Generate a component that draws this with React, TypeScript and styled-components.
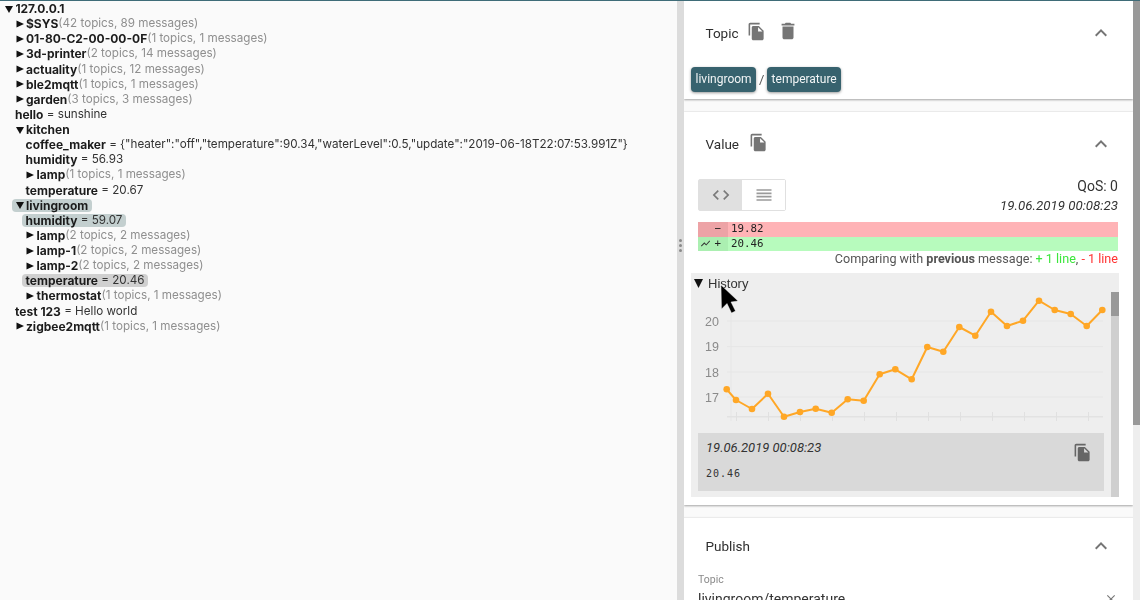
import React from 'react';
import styled, {createGlobalStyle} from 'styled-components';

const colors = {
    teal: '#37626e',
    text: '#222',
    muted: '#8f8f8f',
    icon: '#757575',
    orange: '#ffa726',
};

const GlobalStyle = createGlobalStyle`
  html, body {
    margin: 0;
    padding: 0;
    height: 100%;
    overflow: hidden;
    background: #fafafa;
    font-family: "Liberation Sans", Arial, sans-serif;
    color: ${colors.text};
  }
`;

const Page = styled.div`
  position: relative;
  width: 1140px;
  height: 600px;
  overflow: hidden;
  display: flex;
  flex-direction: column;
  filter: blur(.35px);
`;

const TopLine = styled.div`
  height: 1px;
  flex: none;
  background: #3f6c78;
`;

const Main = styled.div`
  flex: 1;
  min-height: 0;
  display: flex;
`;

const TreePane = styled.div`
  width: 677px;
  flex: none;
  font-family: Inter, sans-serif;
  font-size: 12px;
  color: #222;
`;

const Row = styled.div<{$depth: number}>`
  height: 15.14px;
  line-height: 15.14px;
  display: flex;
  align-items: center;
  white-space: nowrap;
  padding-left: ${p => 4.4 + p.$depth * 10.6}px;
`;

const Pill = styled.span<{$tone?: 'teal' | 'gray'}>`
  display: inline-flex;
  align-items: center;
  height: 13px;
  ${p => p.$tone && `
    margin-left: -3.5px;
    padding: 0 3.5px;
    border-radius: 4px;
    background: ${p.$tone === 'teal' ? '#c3cfcf' : '#d0d0d0'};
  `}
`;

const Arrow = styled.svg`
  width: 8px;
  height: 8px;
  flex: none;
  margin: 0 2.5px 0 .5px;
  fill: #111;
`;

const Name = styled.b`
  font-weight: 700;
  color: #1c1c1c;
`;

const Summary = styled.span`
  font-size: 11.65px;
  color: ${colors.muted};
`;

const Value = styled.span`
  font-size: 11.65px;
  white-space: pre;
  color: #333;
`;

const Divider = styled.div`
  width: 7px;
  flex: none;
  background: #dcdcdc;
  display: flex;
  flex-direction: column;
  align-items: center;
  justify-content: center;
  gap: 2px;
  padding-bottom: 110px;
  box-sizing: border-box;
`;

const Dot = styled.span`
  width: 3px;
  height: 3px;
  border-radius: 50%;
  background: #8a8a8a;
`;

const Sidebar = styled.div`
  width: 449px;
  flex: none;
  overflow: hidden;
  background: #fafafa;
`;

const PageScrollbar = styled.div`
  width: 7px;
  flex: none;
  background: #eeeeee;
`;

const PageThumb = styled.div`
  height: 424px;
  background: #999;
`;

const Card = styled.section<{$last?: boolean}>`
  background: #fff;
  box-shadow: ${p => (p.$last ? '0 -1px 1px rgba(0,0,0,.06)' : '0 1px 2px rgba(0,0,0,.35), 0 -1px 1px rgba(0,0,0,.04)')};
  margin-bottom: 13px;
`;

const CardHeader = styled.div<{$height: number}>`
  height: ${p => p.$height}px;
  display: flex;
  align-items: center;
  padding: 0 20px 0 21.5px;
`;

const CardTitle = styled.span`
  font-family: Roboto, sans-serif;
  font-size: 13.5px;
  color: #2e2e2e;
`;

const HeaderSpacer = styled.div`
  flex: 1;
`;

const Icon = styled.svg<{$size: number; $color?: string}>`
  width: ${p => p.$size}px;
  height: ${p => p.$size}px;
  flex: none;
  fill: ${p => p.$color || colors.icon};
`;

const HeaderAction = styled.span<{$gap: number}>`
  display: inline-flex;
  margin-left: ${p => p.$gap}px;
  margin-top: -3px;
`;

const Chips = styled.div`
  display: flex;
  align-items: center;
  padding: 3px 0 7px 7px;
`;

const Chip = styled.span`
  height: 25px;
  line-height: 25px;
  padding: 0 4.5px;
  border-radius: 4px;
  background: ${colors.teal};
  color: #f2f5f6;
  font-family: Roboto, sans-serif;
  font-size: 12px;
  box-shadow: 0 1px 3px rgba(0, 0, 0, .4);
`;

const Slash = styled.span`
  width: 11px;
  text-align: center;
  font-family: Roboto, sans-serif;
  font-size: 13px;
  color: #555;
`;

const ValueBody = styled.div`
  padding: 3px 15px 8px 14px;
`;

const Toolbar = styled.div`
  display: flex;
  justify-content: space-between;
  height: 32px;
`;

const Toggle = styled.div`
  display: flex;
  border: 1px solid #e0e0e0;
  border-radius: 2px;
  box-sizing: border-box;
  height: 32px;
`;

const ToggleButton = styled.div<{$active?: boolean}>`
  width: 43px;
  display: flex;
  align-items: center;
  justify-content: center;
  background: ${p => (p.$active ? '#e0e0e0' : '#fff')};
`;

const Meta = styled.div`
  text-align: right;
  color: #333;
`;

const Qos = styled.div`
  font-family: Roboto, sans-serif;
  font-size: 14px;
  height: 19px;
  line-height: 15px;
`;

const DateLabel = styled.div<{$large?: boolean}>`
  font-family: Roboto, sans-serif;
  font-style: italic;
  font-size: ${p => (p.$large ? 13.3 : 13)}px;
  color: #333;
`;

const Diff = styled.div`
  margin-top: 11px;
  font-family: "DejaVu Sans Mono", monospace;
  font-size: 10.8px;
  color: #222;
`;

const DiffRow = styled.div<{$kind: 'del' | 'add'}>`
  height: 14.5px;
  line-height: 14.5px;
  display: flex;
  background: ${p => (p.$kind === 'del' ? '#ffb3b6' : '#b7fbbd')};
`;

const DiffGutter = styled.div<{$kind: 'del' | 'add'}>`
  width: 30px;
  flex: none;
  display: flex;
  align-items: center;
  justify-content: flex-end;
  gap: 3px;
  padding-right: 7px;
  box-sizing: border-box;
  background: ${p => (p.$kind === 'del' ? '#eda3a6' : '#abefb1')};
`;

const DiffText = styled.span`
  padding-left: 3px;
`;

const CompareNote = styled.div`
  height: 22px;
  line-height: 16px;
  text-align: right;
  font-family: Roboto, sans-serif;
  font-size: 12.6px;
  color: #555;
`;

const Added = styled.span`
  color: #3ce63c;
`;

const Removed = styled.span`
  color: #f33;
`;

const History = styled.div`
  position: relative;
  height: 224px;
  margin: 0 -1px 0 -7px;
  background: #eee;
  overflow: hidden;
`;

const HistoryHead = styled.div`
  height: 20px;
  display: flex;
  align-items: center;
  padding-left: 3px;
  font-size: 13px;
  color: #333;
`;

const HistoryArrow = styled.svg`
  width: 9px;
  height: 9px;
  margin-right: 5px;
  fill: #111;
`;

const Chart = styled.svg`
  display: block;
  width: 420px;
  height: 140px;
`;

const AxisLabel = styled.text`
  font-family: "Liberation Sans", sans-serif;
  font-size: 12.5px;
  fill: #8a8a8a;
`;

const Details = styled.div`
  position: relative;
  height: 58px;
  margin-left: 7px;
  width: 406px;
  background: #d9d9d9;
  padding: 7px 8px;
  box-sizing: border-box;
`;

const DetailValue = styled.div`
  margin-top: 13px;
  font-family: "DejaVu Sans Mono", monospace;
  font-size: 10px;
  letter-spacing: 1px;
  color: #333;
`;

const DetailCopy = styled.span`
  position: absolute;
  right: 12px;
  top: 10px;
  display: inline-flex;
`;

const HistoryScroll = styled.div`
  position: absolute;
  top: 19px;
  right: 0;
  bottom: 0;
  width: 8px;
  background: #cfcfcf;
`;

const HistoryThumb = styled.div`
  height: 24px;
  background: #999;
`;

const PublishBody = styled.div`
  padding: 0 15px 0 14px;
`;

const FieldLabel = styled.div`
  font-family: Roboto, sans-serif;
  font-size: 10.5px;
  color: #8a8a8a;
  height: 17px;
  line-height: 12px;
`;

const FieldRow = styled.div`
  display: flex;
  justify-content: space-between;
  align-items: center;
  font-family: Roboto, sans-serif;
  font-size: 14px;
  color: #333;
`;

const Cursor = styled.svg`
  position: absolute;
  left: 715px;
  top: 280px;
  width: 30px;
  height: 40px;
`;

const paths = {
    copy: 'M16 1H4c-1.1 0-2 .9-2 2v14h2V3h12V1zm-1 4l6 6v10c0 1.1-.9 2-2 2H7.99C6.89 23 6 22.1 6 21l.01-14c0-1.1.89-2 1.99-2h7zm-1 7h5.5L14 6.5V12z',
    trash: 'M6 19c0 1.1.9 2 2 2h8c1.1 0 2-.9 2-2V7H6v12zM19 4h-3.5l-1-1h-5l-1 1H5v2h14V4z',
    less: 'M12 8l-6 6 1.41 1.41L12 10.83l4.59 4.58L18 14z',
    code: 'M9.4 16.6L4.8 12l4.6-4.6L8 6l-6 6 6 6 1.4-1.4zm5.2 0l4.6-4.6-4.6-4.6L16 6l6 6-6 6-1.4-1.4z',
    lines: 'M3 15h18v-2H3v2zm0 4h18v-2H3v2zm0-8h18V9H3v2zm0-6v2h18V5H3z',
    chart: 'M3.5 18.49l6-6.01 4 4L22 6.92l-1.41-1.41-7.09 7.97-4-4L2 16.99z',
    clear: 'M19 6.41L17.59 5 12 10.59 6.41 5 5 6.41 10.59 12 5 17.59 6.41 19 12 13.41 17.59 19 19 17.59 13.41 12z',
};

const MuiIcon = ({d, size, color}: {d: string; size: number; color?: string}) => (
    <Icon viewBox="0 0 24 24" $size={size} $color={color}><path d={d}/></Icon>
);

type TreeNode = {
    depth: number;
    name: string;
    arrow?: 'open' | 'closed';
    summary?: string;
    value?: string;
    tone?: 'teal' | 'gray';
};

const tree: TreeNode[] = [
    {depth: 0, name: '127.0.0.1', arrow: 'open'},
    {depth: 1, name: '$SYS', arrow: 'closed', summary: '(42 topics, 89 messages)'},
    {depth: 1, name: '01-80-C2-00-00-0F', arrow: 'closed', summary: '(1 topics, 1 messages)'},
    {depth: 1, name: '3d-printer', arrow: 'closed', summary: '(2 topics, 14 messages)'},
    {depth: 1, name: 'actuality', arrow: 'closed', summary: '(1 topics, 12 messages)'},
    {depth: 1, name: 'ble2mqtt', arrow: 'closed', summary: '(1 topics, 1 messages)'},
    {depth: 1, name: 'garden', arrow: 'closed', summary: '(3 topics, 3 messages)'},
    {depth: 1, name: 'hello', value: ' = sunshine'},
    {depth: 1, name: 'kitchen', arrow: 'open'},
    {depth: 2, name: 'coffee_maker', value: ' = {"heater":"off","temperature":90.34,"waterLevel":0.5,"update":"2019-06-18T22:07:53.991Z"}'},
    {depth: 2, name: 'humidity', value: ' = 56.93'},
    {depth: 2, name: 'lamp', arrow: 'closed', summary: '(1 topics, 1 messages)'},
    {depth: 2, name: 'temperature', value: ' = 20.67'},
    {depth: 1, name: 'livingroom', arrow: 'open', tone: 'teal'},
    {depth: 2, name: 'humidity', value: ' = 59.07', tone: 'teal'},
    {depth: 2, name: 'lamp', arrow: 'closed', summary: '(2 topics, 2 messages)'},
    {depth: 2, name: 'lamp-1', arrow: 'closed', summary: '(2 topics, 2 messages)'},
    {depth: 2, name: 'lamp-2', arrow: 'closed', summary: '(2 topics, 2 messages)'},
    {depth: 2, name: 'temperature', value: ' = 20.46', tone: 'gray'},
    {depth: 2, name: 'thermostat', arrow: 'closed', summary: '(1 topics, 1 messages)'},
    {depth: 1, name: 'test 123', value: ' = Hello world'},
    {depth: 1, name: 'zigbee2mqtt', arrow: 'closed', summary: '(1 topics, 1 messages)'},
];

const TreeRow = ({node}: {node: TreeNode}) => (
    <Row $depth={node.depth}>
        <Pill $tone={node.tone}>
            {node.arrow && (
                <Arrow viewBox="0 0 8 8">
                    <path d={node.arrow === 'open' ? 'M0 1h8L4 8z' : 'M.5 .6l7.5 3.4-7.5 3.4z'}/>
                </Arrow>
            )}
            <Name>{node.name}</Name>
            {node.summary && <Summary>{node.summary}</Summary>}
            {node.value && <Value>{node.value}</Value>}
        </Pill>
    </Row>
);

// page coordinates, the chart viewBox is offset to match
const points = [
    [726.7, 389.3], [736, 400], [752, 409], [768, 393.7], [784, 416.7], [800, 412], [815.7, 408.7],
    [831.7, 412.7], [847.7, 399.3], [863.7, 400.7], [879.7, 374.3], [895.3, 369.3], [911.7, 379.3],
    [927.3, 347], [943.3, 351.7], [959.3, 327], [975.3, 335.7], [991, 311.7], [1007, 326],
    [1023, 320.7], [1039, 300.7], [1054.7, 310], [1070.7, 314], [1086.7, 326], [1102.3, 310],
];
const gridLines = [
    {y: 321, label: '20'},
    {y: 346.7, label: '19'},
    {y: 372, label: '18'},
    {y: 397, label: '17'},
];
const ticks = Array.from({length: 12}, (_, i) => 736.5 + i * 32);

const HistoryChart = () => (
    <Chart viewBox="691 293 420 140">
        {gridLines.map(g => (
            <g key={g.label}>
                <line x1={727} x2={1103} y1={g.y} y2={g.y} stroke="#e6e6e6"/>
                <AxisLabel x={719} y={g.y + 4.5} textAnchor="end">{g.label}</AxisLabel>
            </g>
        ))}
        <line x1={731} x2={731} y1={312} y2={421} stroke="#e6e6e6"/>
        <line x1={727} x2={1103} y1={416.7} y2={416.7} stroke="#e2e2e2" strokeWidth={1.4}/>
        {ticks.map(x => <line key={x} x1={x} x2={x} y1={412} y2={421} stroke="#e0e0e0"/>)}
        <polyline
            points={points.map(p => p.join(',')).join(' ')}
            fill="none"
            stroke={colors.orange}
            strokeWidth={2}
            strokeLinejoin="round"
        />
        {points.map(p => <circle key={p[0]} cx={p[0]} cy={p[1]} r={3.3} fill={colors.orange}/>)}
    </Chart>
);

const App = () => {
    return (
        <Page>
            <GlobalStyle/>
            <TopLine/>
            <Main>
                <TreePane>
                    {tree.map((node, i) => <TreeRow key={i} node={node}/>)}
                </TreePane>
                <Divider>
                    <Dot/>
                    <Dot/>
                    <Dot/>
                </Divider>
                <Sidebar>
                    <Card>
                        <CardHeader $height={63}>
                            <CardTitle>Topic</CardTitle>
                            <HeaderAction $gap={8}><MuiIcon d={paths.copy} size={19}/></HeaderAction>
                            <HeaderAction $gap={11}><MuiIcon d={paths.trash} size={22}/></HeaderAction>
                            <HeaderSpacer/>
                            <MuiIcon d={paths.less} size={24}/>
                        </CardHeader>
                        <Chips>
                            <Chip>livingroom</Chip>
                            <Slash>/</Slash>
                            <Chip>temperature</Chip>
                        </Chips>
                    </Card>
                    <Card>
                        <CardHeader $height={64}>
                            <CardTitle>Value</CardTitle>
                            <HeaderAction $gap={10}><MuiIcon d={paths.copy} size={19}/></HeaderAction>
                            <HeaderSpacer/>
                            <MuiIcon d={paths.less} size={24}/>
                        </CardHeader>
                        <ValueBody>
                            <Toolbar>
                                <Toggle>
                                    <ToggleButton $active><MuiIcon d={paths.code} size={20} color="#7a7a7a"/></ToggleButton>
                                    <ToggleButton><MuiIcon d={paths.lines} size={20} color="#9a9a9a"/></ToggleButton>
                                </Toggle>
                                <Meta>
                                    <Qos>QoS: 0</Qos>
                                    <DateLabel $large>19.06.2019 00:08:23</DateLabel>
                                </Meta>
                            </Toolbar>
                            <Diff>
                                <DiffRow $kind="del">
                                    <DiffGutter $kind="del">{'\u2212'}</DiffGutter>
                                    <DiffText>19.82</DiffText>
                                </DiffRow>
                                <DiffRow $kind="add">
                                    <DiffGutter $kind="add"><MuiIcon d={paths.chart} size={11} color="#333"/>+</DiffGutter>
                                    <DiffText>20.46</DiffText>
                                </DiffRow>
                            </Diff>
                            <CompareNote>
                                Comparing with <b>previous</b> message: <Added>+ 1 line</Added>, <Removed>- 1 line</Removed>
                            </CompareNote>
                            <History>
                                <HistoryHead>
                                    <HistoryArrow viewBox="0 0 8 8"><path d="M0 0h8L4 8z"/></HistoryArrow>
                                    History
                                </HistoryHead>
                                <HistoryChart/>
                                <Details>
                                    <DateLabel>19.06.2019 00:08:23</DateLabel>
                                    <DetailValue>20.46</DetailValue>
                                    <DetailCopy><MuiIcon d={paths.copy} size={19} color="#666"/></DetailCopy>
                                </Details>
                                <HistoryScroll><HistoryThumb/></HistoryScroll>
                            </History>
                        </ValueBody>
                    </Card>
                    <Card $last>
                        <CardHeader $height={56}>
                            <CardTitle>Publish</CardTitle>
                            <HeaderSpacer/>
                            <MuiIcon d={paths.less} size={24}/>
                        </CardHeader>
                        <PublishBody>
                            <FieldLabel>Topic</FieldLabel>
                            <FieldRow>
                                livingroom/temperature
                                <MuiIcon d={paths.clear} size={14} color="#777"/>
                            </FieldRow>
                        </PublishBody>
                    </Card>
                </Sidebar>
                <PageScrollbar><PageThumb/></PageScrollbar>
            </Main>
            <Cursor viewBox="715 280 30 40">
                <path d="M721 285L721.5 309L727 303.5L731.5 313L735.5 311L731 302L738 301z" fill="#000" stroke="#fff" strokeWidth={0.4}/>
            </Cursor>
        </Page>
    );
};

export default App;
